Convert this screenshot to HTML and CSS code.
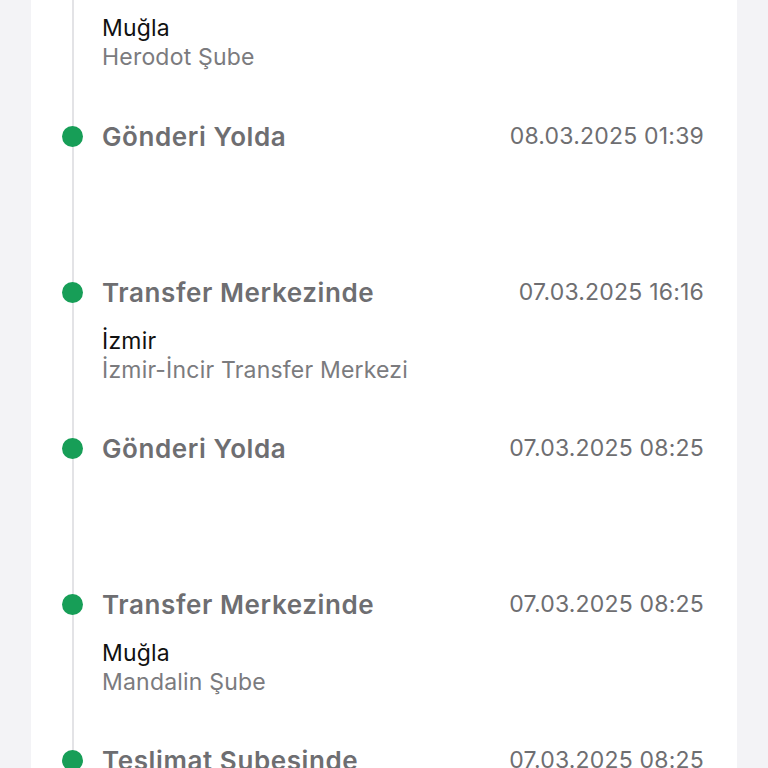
FILE: index.html
```html
<!DOCTYPE html>
<html>
<head>
    <title>Gönderi Takibi</title>
    <link rel="stylesheet" href="styles.css">
</head>
<body>
    <div class="card">
        <ul class="timeline">
            <li class="item item-cut">
                <div class="place">
                    <div class="city">Muğla</div>
                    <div class="branch">Herodot Şube</div>
                </div>
            </li>
            <li class="item">
                <span class="dot"></span>
                <div class="head">
                    <span class="status">Gönderi Yolda</span>
                    <span class="date">08.03.2025 01:39</span>
                </div>
            </li>
            <li class="item">
                <span class="dot"></span>
                <div class="head">
                    <span class="status">Transfer Merkezinde</span>
                    <span class="date">07.03.2025 16:16</span>
                </div>
                <div class="place">
                    <div class="city">İzmir</div>
                    <div class="branch">İzmir-İncir Transfer Merkezi</div>
                </div>
            </li>
            <li class="item">
                <span class="dot"></span>
                <div class="head">
                    <span class="status">Gönderi Yolda</span>
                    <span class="date">07.03.2025 08:25</span>
                </div>
            </li>
            <li class="item">
                <span class="dot"></span>
                <div class="head">
                    <span class="status">Transfer Merkezinde</span>
                    <span class="date">07.03.2025 08:25</span>
                </div>
                <div class="place">
                    <div class="city">Muğla</div>
                    <div class="branch">Mandalin Şube</div>
                </div>
            </li>
            <li class="item">
                <span class="dot"></span>
                <div class="head">
                    <span class="status">Teslimat Şubesinde</span>
                    <span class="date">07.03.2025 08:25</span>
                </div>
            </li>
        </ul>
    </div>
</body>
</html>
```

FILE: styles.css
```css
body {
    margin: 0;
    background: #f3f3f6;
    font-family: Inter, "Noto Sans", sans-serif;
    height: 768px;
    overflow: hidden;
}
.card {
    background: #fff;
    margin: 0 31px;
    padding: 0 33px 0 41px;
    min-height: 900px;
    display: flow-root;
}
.timeline {
    list-style: none;
    margin: 0;
    padding: 0 0 0 28px;
    border-left: 2px solid #e3e3e6;
}
.item {
    position: relative;
    min-height: 156px;
    box-sizing: border-box;
}
.item-cut {
    min-height: 120px;
}
.item-cut .place {
    padding-top: 14px;
}
.dot {
    position: absolute;
    left: -40px;
    top: 6px;
    width: 21px;
    height: 21px;
    border-radius: 50%;
    background: #179e57;
}
.head {
    display: flex;
    justify-content: space-between;
    align-items: center;
    height: 32px;
}
.status {
    font-size: 26px;
    font-weight: 600;
    letter-spacing: 0.6px;
    color: #6e6e71;
}
.date {
    font-size: 23px;
    letter-spacing: 0.2px;
    color: #6e6e71;
}
.place {
    padding-top: 19px;
    font-size: 23px;
    line-height: 29px;
    letter-spacing: 0.2px;
}
.city {
    color: #111;
}
.branch {
    color: #7b7b7e;
}
```
